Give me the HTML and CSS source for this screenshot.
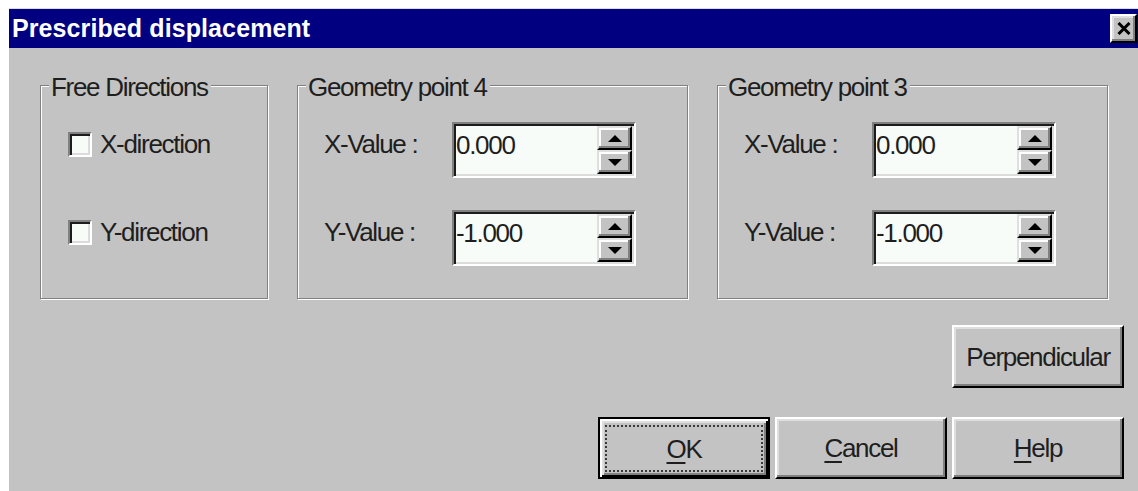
FILE: index.html
```html
<!DOCTYPE html>
<html lang="en">
<head>
<meta charset="utf-8">
<title>Prescribed displacement</title>
<link rel="stylesheet" href="styles.css">
</head>
<body>
<div class="dialog">
  <div class="titlebar">
    <span class="title">Prescribed displacement</span>
    <button class="close" type="button" aria-label="Close">
      <svg width="14" height="13" viewBox="0 0 14 13"><path d="M1.5 1 L12.5 12 M12.5 1 L1.5 12" stroke="#000" stroke-width="3" fill="none"/></svg>
    </button>
  </div>
  <div class="content">
    <div class="groups">
      <fieldset class="group group-free">
        <legend>Free Directions</legend>
        <div class="checks">
          <label class="check"><span class="box"></span>X-direction</label>
          <label class="check"><span class="box"></span>Y-direction</label>
        </div>
      </fieldset>
      <fieldset class="group group-point">
        <legend>Geometry point 4</legend>
        <div class="values">
          <div class="value-row">
            <span class="value-label">X-Value :</span>
            <div class="spin">
              <span class="spin-text">0.000</span>
              <span class="spin-btns">
                <span class="spin-btn"><i class="arrow-up"></i></span>
                <span class="spin-btn"><i class="arrow-down"></i></span>
              </span>
            </div>
          </div>
          <div class="value-row">
            <span class="value-label">Y-Value :</span>
            <div class="spin">
              <span class="spin-text">-1.000</span>
              <span class="spin-btns">
                <span class="spin-btn"><i class="arrow-up"></i></span>
                <span class="spin-btn"><i class="arrow-down"></i></span>
              </span>
            </div>
          </div>
        </div>
      </fieldset>
      <fieldset class="group group-point">
        <legend>Geometry point 3</legend>
        <div class="values">
          <div class="value-row">
            <span class="value-label">X-Value :</span>
            <div class="spin">
              <span class="spin-text">0.000</span>
              <span class="spin-btns">
                <span class="spin-btn"><i class="arrow-up"></i></span>
                <span class="spin-btn"><i class="arrow-down"></i></span>
              </span>
            </div>
          </div>
          <div class="value-row">
            <span class="value-label">Y-Value :</span>
            <div class="spin">
              <span class="spin-text">-1.000</span>
              <span class="spin-btns">
                <span class="spin-btn"><i class="arrow-up"></i></span>
                <span class="spin-btn"><i class="arrow-down"></i></span>
              </span>
            </div>
          </div>
        </div>
      </fieldset>
    </div>
    <div class="actions">
      <div class="btn-row">
        <button class="btn" type="button">Perpendicular</button>
      </div>
      <div class="btn-row">
        <button class="btn btn-default" type="button"><span class="focus"><u>O</u>K</span></button>
        <button class="btn" type="button"><u>C</u>ancel</button>
        <button class="btn" type="button"><u>H</u>elp</button>
      </div>
    </div>
  </div>
</div>
</body>
</html>
```

FILE: styles.css
```css
* {
  box-sizing: border-box;
}

html,
body {
  margin: 0;
  background: #ffffff;
}

body {
  width: 1138px;
  height: 491px;
  overflow: hidden;
  font-family: "Liberation Sans", Arial, sans-serif;
  font-size: 26px;
  letter-spacing: -1.3px;
  color: #1e1e1e;
}

/* window frame */
.dialog {
  margin: 8px 0 0 9px;
  height: 483px;
  background: #c3c3c3;
  border-top: 1px solid #dcdcdc;
  display: flex;
  flex-direction: column;
}

.titlebar {
  height: 39px;
  background: #000080;
  display: flex;
  align-items: center;
  justify-content: space-between;
  padding: 0 1px 0 3px;
}

.title {
  color: #ffffff;
  font-weight: bold;
  font-size: 25px;
  line-height: 25px;
  letter-spacing: 0.1px;
}

.close {
  width: 27px;
  height: 29px;
  padding: 0;
  background: #c3c3c3;
  border: 2px solid;
  border-color: #ffffff #000000 #000000 #ffffff;
  box-shadow: inset -2px -2px #808080, inset 2px 2px #dfdfdf;
  display: flex;
  align-items: center;
  justify-content: center;
}

.close svg {
  display: block;
}

/* dialog body */
.content {
  flex: 1;
  padding: 25px 14px 0 31px;
  display: flex;
  flex-direction: column;
}

.groups {
  display: flex;
  gap: 29px;
}

/* etched group boxes */
.group {
  margin: 0;
  padding: 0;
  min-width: 0;
  border: 1px solid #808080;
  box-shadow: inset 1px 1px #ffffff, 1px 1px #ffffff;
}

.group-free {
  width: 228px;
}

.group-point {
  width: 391px;
}

.group legend {
  margin-left: 8px;
  padding: 4px 3px 0 2px;
  line-height: 20px;
  background: #c3c3c3;
}

/* check boxes */
.checks {
  padding: 35px 0 0 27px;
  display: flex;
  flex-direction: column;
  gap: 64px;
}

.check {
  display: flex;
  align-items: center;
  gap: 8px;
  height: 24px;
  line-height: 24px;
}

.box {
  width: 24px;
  height: 25px;
  background: #f8fcf8;
  border: 2px solid;
  border-color: #808080 #ffffff #ffffff #808080;
  box-shadow: inset 2px 2px #1c1c1c, inset -2px -2px #dcdcdc;
}

/* value rows with spin boxes */
.values {
  padding: 25px 0 32px 26px;
  display: flex;
  flex-direction: column;
  gap: 32px;
}

.value-row {
  display: flex;
  height: 56px;
}

.value-label {
  width: 128px;
  padding-top: 10px;
  line-height: 24px;
}

.spin {
  width: 184px;
  height: 56px;
  padding: 2px;
  background: #f8fcf8;
  border: 2px solid;
  border-color: #808080 #ffffff #ffffff #808080;
  box-shadow: inset 2px 2px #1c1c1c, inset -2px -2px #dcdcdc;
  display: flex;
}

.spin-text {
  flex: 1;
  padding-top: 7px;
  line-height: 24px;
}

.spin-btns {
  width: 35px;
  display: flex;
  flex-direction: column;
}

.spin-btn {
  flex: 1;
  background: #c3c3c3;
  border: 2px solid;
  border-color: #dfdfdf #000000 #000000 #dfdfdf;
  box-shadow: inset -2px -2px #808080, inset 2px 2px #ffffff;
  display: flex;
  align-items: center;
  justify-content: center;
}

.arrow-up,
.arrow-down {
  width: 0;
  height: 0;
  border-left: 7px solid transparent;
  border-right: 7px solid transparent;
}

.arrow-up {
  border-bottom: 7px solid #000000;
}

.arrow-down {
  border-top: 7px solid #000000;
}

/* push buttons */
.actions {
  margin-top: 26px;
  display: flex;
  flex-direction: column;
  align-items: flex-end;
  gap: 29px;
}

.btn-row {
  display: flex;
  gap: 5px;
}

.btn {
  width: 172px;
  height: 62px;
  padding: 0;
  font: inherit;
  letter-spacing: -1.3px;
  line-height: 24px;
  color: #1e1e1e;
  background: #c3c3c3;
  border: 2px solid;
  border-color: #ffffff #000000 #000000 #ffffff;
  box-shadow: inset -2px -2px #808080, inset 2px 2px #dfdfdf;
  display: flex;
  align-items: center;
  justify-content: center;
}

.actions .btn-row:first-child .btn {
  height: 63px;
}

.btn u {
  text-decoration-thickness: 2px;
  text-underline-offset: 4px;
}

.btn-default {
  border-color: #000000;
  box-shadow: inset 2px 2px #ffffff, inset -2px -2px #000000, inset 4px 4px #dfdfdf, inset -4px -4px #808080;
  padding: 6px 5px 5px 5px;
  align-items: stretch;
}

.focus {
  flex: 1;
  border: 2px dotted #3a3a3a;
  display: flex;
  align-items: center;
  justify-content: center;
}
```
